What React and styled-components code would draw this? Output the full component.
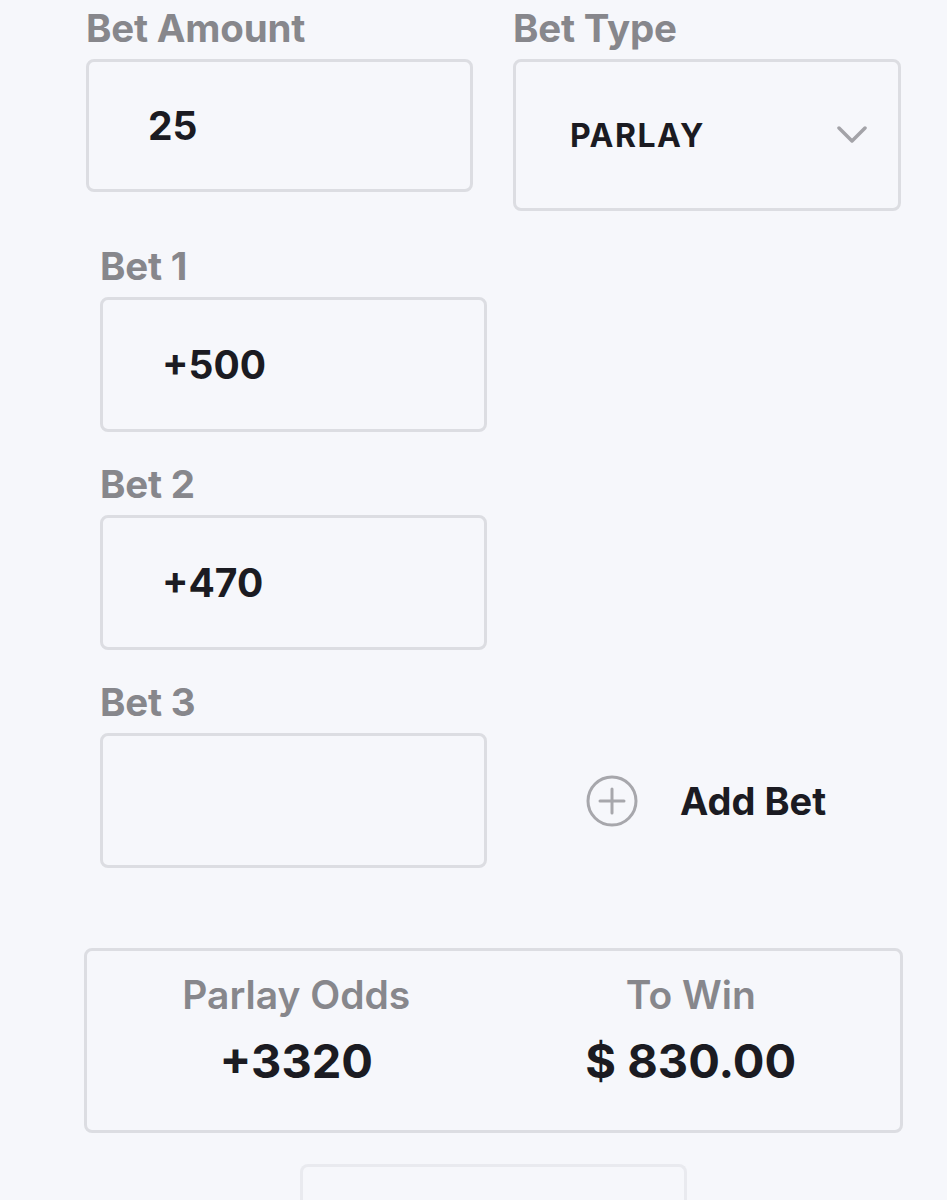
import React from "react";
import styled, { createGlobalStyle } from "styled-components";

const GlobalStyle = createGlobalStyle`
    html, body {
        margin: 0;
        padding: 0;
        background: #f6f7fb;
    }
    body {
        font-family: "Inter", "Liberation Sans", sans-serif;
        -webkit-font-smoothing: antialiased;
    }
`;

const bets = [
    { id: 1, odds: "+500" },
    { id: 2, odds: "+470" },
    { id: 3, odds: "" },
];

export default function App() {
    return (
        <>
            <GlobalStyle />
            <Page>
                <TopRow>
                    <Field>
                        <Label>Bet Amount</Label>
                        <InputBox $height={133} $padLeft={59}>
                            <Value>25</Value>
                        </InputBox>
                    </Field>
                    <Field>
                        <Label>Bet Type</Label>
                        <SelectBox>
                            <SelectValue>PARLAY</SelectValue>
                            <Chevron viewBox="0 0 30 18">
                                <path d="M2 2 L15 15 L28 2" />
                            </Chevron>
                        </SelectBox>
                    </Field>
                </TopRow>

                <BetList>
                    {bets.map((bet, i) => (
                        <BetRow key={bet.id}>
                            <Field>
                                <Label>Bet {bet.id}</Label>
                                <InputBox $height={135} $padLeft={59}>
                                    <Value>{bet.odds}</Value>
                                </InputBox>
                            </Field>
                            {i === bets.length - 1 && (
                                <AddBet>
                                    <PlusCircle viewBox="0 0 52 52">
                                        <circle cx="26" cy="26" r="24" />
                                        <path d="M26 14 V38 M14 26 H38" />
                                    </PlusCircle>
                                    <AddText>Add Bet</AddText>
                                </AddBet>
                            )}
                        </BetRow>
                    ))}
                </BetList>

                <Summary>
                    <Stat>
                        <StatLabel>Parlay Odds</StatLabel>
                        <StatValue>+3320</StatValue>
                    </Stat>
                    <Stat>
                        <StatLabel>To Win</StatLabel>
                        <StatValue>$ 830.00</StatValue>
                    </Stat>
                </Summary>

                <BottomButton />
            </Page>
        </>
    );
}

// --- STYLES ---

const Page = styled.div`
    width: 947px;
    box-sizing: border-box;
    padding: 7px 44px 0 84px;
`;

const TopRow = styled.div`
    display: grid;
    grid-template-columns: 387px 388px;
    gap: 40px;
    padding-left: 2px;
    align-items: start;
`;

const Field = styled.div`
    display: flex;
    flex-direction: column;
`;

const Label = styled.div`
    font-size: 38.5px;
    font-weight: 700;
    line-height: 43px;
    color: #87878c;
    margin-bottom: 9px;
    letter-spacing: -0.2px;
`;

const InputBox = styled.div`
    box-sizing: border-box;
    width: 387px;
    height: ${(p) => p.$height}px;
    border: 3px solid #dcdde2;
    border-radius: 8px;
    display: flex;
    align-items: center;
    padding-left: ${(p) => p.$padLeft}px;
`;

const Value = styled.span`
    font-size: 39px;
    font-weight: 700;
    color: #1b1b22;
`;

const SelectBox = styled(InputBox).attrs({ $height: 152, $padLeft: 54 })`
    width: 388px;
    padding-right: 31px;
    justify-content: space-between;
`;

const SelectValue = styled.span`
    font-size: 32px;
    font-weight: 700;
    letter-spacing: 1.5px;
    color: #1b1b22;
`;

const Chevron = styled.svg`
    width: 30px;
    height: 18px;
    fill: none;
    stroke: #a3a3a8;
    stroke-width: 3.5;
    stroke-linecap: round;
    stroke-linejoin: round;
`;

const BetList = styled.div`
    display: flex;
    flex-direction: column;
    gap: 31px;
    margin-top: 34px;
    padding-left: 16px;
`;

const BetRow = styled.div`
    display: flex;
    align-items: flex-end;
`;

const AddBet = styled.div`
    height: 135px;
    display: flex;
    align-items: center;
    gap: 42px;
    margin-left: 99px;
    cursor: pointer;
`;

const PlusCircle = styled.svg`
    width: 52px;
    height: 52px;
    fill: none;
    stroke: #a7a7ac;
    stroke-width: 3;
    stroke-linecap: round;
`;

const AddText = styled.span`
    font-size: 38px;
    font-weight: 700;
    color: #1b1b22;
`;

const Summary = styled.div`
    box-sizing: border-box;
    margin-top: 80px;
    width: 819px;
    height: 185px;
    border: 3px solid #dcdde2;
    border-radius: 8px;
    display: grid;
    grid-template-columns: 1fr 1fr;
    padding: 21px 12px 0;
`;

const Stat = styled.div`
    display: flex;
    flex-direction: column;
    align-items: center;
    gap: 14px;
`;

const StatLabel = styled.div`
    font-size: 39px;
    font-weight: 600;
    line-height: 45px;
    color: #87878c;
`;

const StatValue = styled.div`
    font-size: 47px;
    font-weight: 700;
    line-height: 60px;
    color: #1b1b22;
`;

const BottomButton = styled.div`
    box-sizing: border-box;
    margin: 31px 0 0 216px;
    width: 387px;
    height: 80px;
    border: 3px solid #e9eaef;
    border-bottom: none;
    border-radius: 8px 8px 0 0;
`;
